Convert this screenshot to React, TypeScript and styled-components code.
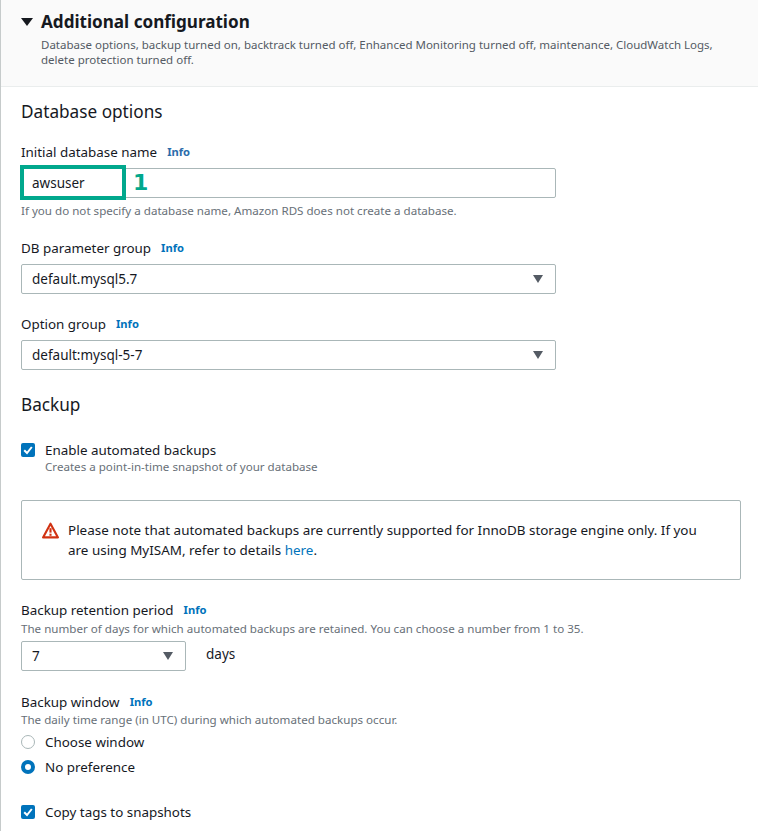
import React from 'react'
import styled, { createGlobalStyle } from 'styled-components'

const Global = createGlobalStyle`
  html, body {
    margin: 0;
    padding: 0;
    background: #fff;
  }
  body {
    font-family: "Noto Sans", "Open Sans", sans-serif;
    font-size: 14px;
    line-height: 20px;
    color: #16191f;
  }
`

const Page = styled.div`
  position: relative;
  width: 758px;
  height: 831px;
  overflow: hidden;
  border-left: 1px solid #c6cbcb;
  box-sizing: border-box;
`

const Header = styled.header`
  height: 87px;
  box-sizing: border-box;
  padding: 11px 20px 0;
  background: #fafafa;
  border-bottom: 1px solid #eaeded;
`

const HeaderTitle = styled.div`
  display: flex;
  align-items: center;
  gap: 8px;
`

const H1 = styled.h1`
  margin: 0;
  font-size: 17.1px;
  line-height: 22px;
  font-weight: 700;
`

const HeaderDesc = styled.p`
  margin: 5px 0 0 20px;
  width: 700px;
  font-size: 11.5px;
  line-height: 14.5px;
  color: #545b64;
`

const Main = styled.main`
  padding: 13px 20px 0;
`

const H2 = styled.h2<{ $top?: number }>`
  margin: ${p => p.$top ?? 0}px 0 0;
  font-size: 17.2px;
  line-height: 24px;
  font-weight: 400;
`

const Field = styled.div<{ $top: number }>`
  margin-top: ${p => p.$top}px;
`

const Label = styled.div`
  display: flex;
  align-items: center;
  gap: 10px;
  height: 20px;
  font-size: 13.4px;
`

const Info = styled.a<{ $dark?: boolean }>`
  color: ${p => (p.$dark ? '#2b6cab' : '#0073bb')};
  font-size: 11.2px;
  font-weight: 700;
`

const Hint = styled.div<{ $top?: number }>`
  margin-top: ${p => p.$top ?? 0}px;
  font-size: 11.6px;
  line-height: 16px;
  color: #687078;
`

const InputBox = styled.div<{ $width?: number; $top?: number }>`
  display: flex;
  align-items: center;
  justify-content: space-between;
  box-sizing: border-box;
  width: ${p => p.$width ?? 535}px;
  height: 30px;
  margin-top: ${p => p.$top ?? 6}px;
  padding: 0 12px 0 10px;
  background: #fff;
  border: 1px solid #aab7b8;
  border-radius: 2px;
  font-size: 13.5px;
`

const Caret = styled.span`
  width: 0;
  height: 0;
  border-left: 5.5px solid transparent;
  border-right: 5.5px solid transparent;
  border-top: 8px solid #545b64;
`

const HeaderCaret = styled(Caret)`
  border-left-width: 6px;
  border-right-width: 6px;
  border-top: 8px solid #16191f;
`

const OptionRow = styled.div<{ $top: number }>`
  display: flex;
  align-items: center;
  gap: 10px;
  margin-top: ${p => p.$top}px;
  height: 20px;
  font-size: 13.4px;
`

const Box = styled.span`
  display: flex;
  align-items: center;
  justify-content: center;
  width: 14px;
  height: 14px;
  border-radius: 2px;
  background: #0073bb;
`

const Radio = styled.span<{ $on?: boolean }>`
  box-sizing: border-box;
  width: 14px;
  height: 14px;
  border-radius: 50%;
  background: #fff;
  border: ${p => (p.$on ? '4px solid #0073bb' : '1px solid #aab7b8')};
`

const SubOption = styled(Hint)`
  margin-left: 24px;
  margin-top: -1px;
`

const Alert = styled.div`
  display: flex;
  gap: 9px;
  box-sizing: border-box;
  width: 720px;
  height: 80px;
  margin-top: 25px;
  padding: 19px 20px 0;
  border: 1px solid #aab7b8;
  border-radius: 2px;
  font-size: 13.45px;
`

const AlertIcon = styled.svg`
  flex: none;
  width: 17px;
  height: 17px;
  margin-top: 2px;
`

const Link = styled.a`
  color: #0073bb;
`

const Inline = styled.div`
  display: flex;
  align-items: center;
  gap: 20px;
  font-size: 13.5px;
`

const Highlight = styled.div`
  position: absolute;
  left: 19px;
  top: 165px;
  width: 106px;
  height: 35px;
  box-sizing: border-box;
  border: 4px solid #01a88d;
`

const Number1 = styled.span`
  position: absolute;
  left: 132px;
  top: 168px;
  font-family: "DejaVu Sans", sans-serif;
  font-size: 22px;
  line-height: 30px;
  font-weight: 700;
  color: #01a88d;
`

const Check = () => (
  <svg width="12" height="12" viewBox="0 0 12 12" fill="none">
    <path d="M2.2 6.2 L5 9 L9.8 3" stroke="#fff" strokeWidth="2" />
  </svg>
)

export default function App() {
  return (
    <Page>
      <Global />
      <Header>
        <HeaderTitle>
          <HeaderCaret />
          <H1>Additional configuration</H1>
        </HeaderTitle>
        <HeaderDesc>
          Database options, backup turned on, backtrack turned off, Enhanced Monitoring turned off, maintenance, CloudWatch Logs, delete protection turned off.
        </HeaderDesc>
      </Header>
      <Main>
        <H2>Database options</H2>
        <Field $top={18}>
          <Label>Initial database name <Info $dark>Info</Info></Label>
          <InputBox>awsuser</InputBox>
          <Hint $top={5}>If you do not specify a database name, Amazon RDS does not create a database.</Hint>
        </Field>
        <Field $top={19}>
          <Label>DB parameter group <Info>Info</Info></Label>
          <InputBox>default.mysql5.7<Caret /></InputBox>
        </Field>
        <Field $top={20}>
          <Label>Option group <Info>Info</Info></Label>
          <InputBox>default:mysql-5-7<Caret /></InputBox>
        </Field>
        <H2 $top={23}>Backup</H2>
        <OptionRow $top={23}><Box><Check /></Box>Enable automated backups</OptionRow>
        <SubOption>Creates a point-in-time snapshot of your database</SubOption>
        <Alert>
          <AlertIcon viewBox="0 0 16 16">
            <path d="M8 1.6 L15 14.5 H1 Z" fill="none" stroke="#d13212" strokeWidth="2" strokeLinejoin="round" />
            <path d="M8 5.8 V10" stroke="#d13212" strokeWidth="2" />
            <path d="M8 11 V13" stroke="#d13212" strokeWidth="2" />
          </AlertIcon>
          <div>
            Please note that automated backups are currently supported for InnoDB storage engine only. If you are using MyISAM, refer to details <Link>here</Link>.
          </div>
        </Alert>
        <Field $top={20}>
          <Label>Backup retention period <Info>Info</Info></Label>
          <Hint $top={1}>The number of days for which automated backups are retained. You can choose a number from 1 to 35.</Hint>
          <Inline>
            <InputBox $width={165} $top={4}>7<Caret /></InputBox>
            days
          </Inline>
        </Field>
        <Field $top={21}>
          <Label>Backup window <Info>Info</Info></Label>
          <Hint>The daily time range (in UTC) during which automated backups occur.</Hint>
        </Field>
        <OptionRow $top={4}><Radio />Choose window</OptionRow>
        <OptionRow $top={5}><Radio $on />No preference</OptionRow>
        <OptionRow $top={25}><Box><Check /></Box>Copy tags to snapshots</OptionRow>
      </Main>
      <Highlight />
      <Number1>1</Number1>
    </Page>
  )
}
